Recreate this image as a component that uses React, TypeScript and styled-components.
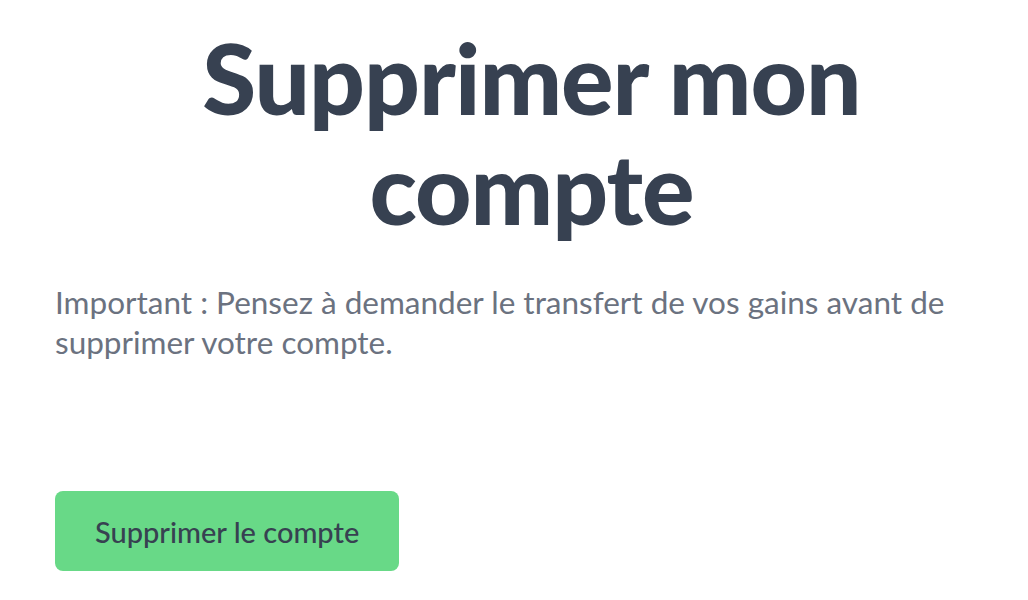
import React from 'react';
import styled, { createGlobalStyle } from 'styled-components';

const GlobalStyle = createGlobalStyle`
  html, body {
    margin: 0;
    padding: 0;
    background: #ffffff;
    font-family: Lato, "Noto Sans", sans-serif;
  }
`;

const Page = styled.main`
  width: 953px;
  padding: 22px 0 0 55px;
  display: flex;
  flex-direction: column;
`;

const Title = styled.h1`
  margin: 0;
  text-align: center;
  font-size: 98px;
  line-height: 110px;
  font-weight: 900;
  color: #374151;
  letter-spacing: -1px;
`;

const Notice = styled.p`
  margin: 40px 0 0;
  font-size: 31.5px;
  line-height: 40px;
  font-weight: 400;
  color: #6b7280;
`;

const DeleteButton = styled.button`
  align-self: flex-start;
  margin-top: 129px;
  height: 80px;
  padding: 0 40px;
  border: none;
  border-radius: 8px;
  background: #68d987;
  color: #374151;
  font-family: inherit;
  font-size: 29px;
  font-weight: 500;
  cursor: pointer;
`;

const App: React.FC = () => (
  <>
    <GlobalStyle />
    <Page>
      <Title>Supprimer mon compte</Title>
      <Notice>
        Important : Pensez à demander le transfert de vos gains avant de supprimer votre compte.
      </Notice>
      <DeleteButton>Supprimer le compte</DeleteButton>
    </Page>
  </>
);

export default App;
